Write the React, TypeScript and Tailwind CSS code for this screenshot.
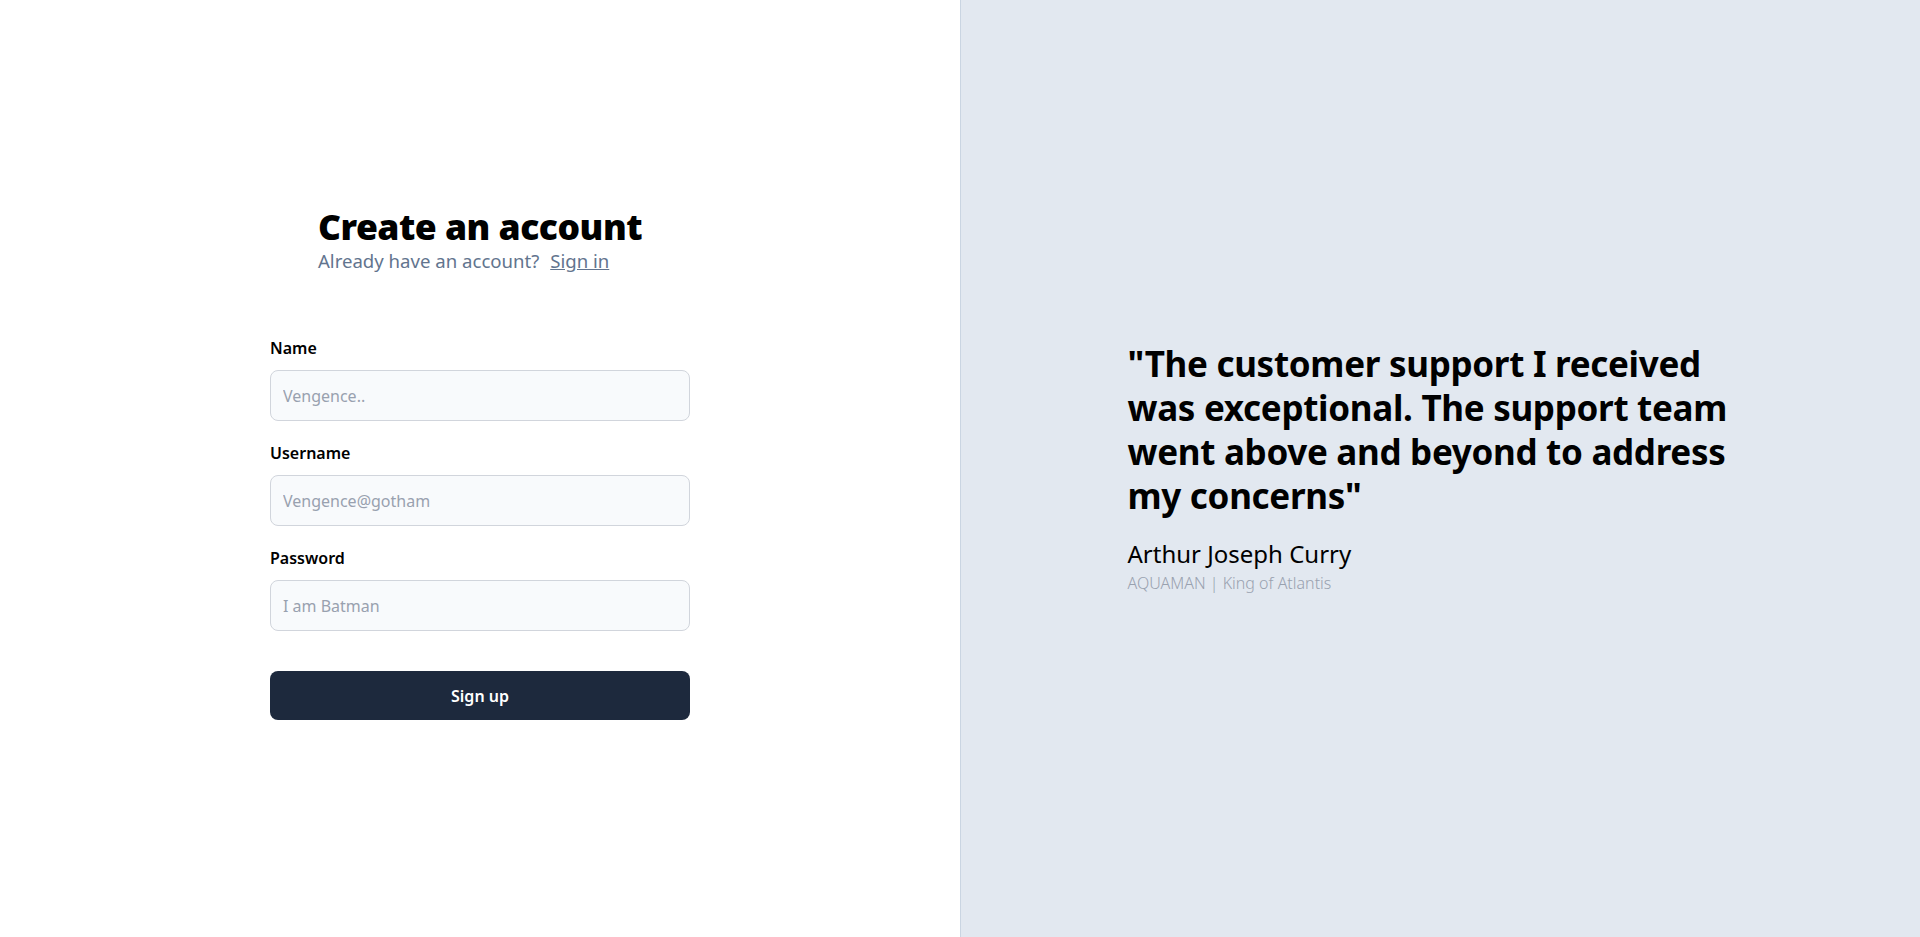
import React from "react";

export default function App() {
  return (
    <div
      className="grid grid-cols-2 h-[937px] w-full bg-white text-black"
      style={{ fontFamily: '"Noto Sans", "Open Sans", sans-serif' }}
    >
      <div className="flex flex-col items-center justify-center pb-[11px]">
        <div className="flex flex-col items-start">
          <h1 className="text-[35.5px] leading-[40px] font-black tracking-[-0.5px]">Create an account</h1>
          <p className="text-[18.6px] leading-7 text-slate-500 mt-[1px]">
            Already have an account?{" "}
            <a href="#" className="underline ml-[6px]">Sign in</a>
          </p>
        </div>
        <form className="w-[420px] mt-[61px] flex flex-col" onSubmit={(e) => e.preventDefault()}>
          <label className="text-[16px] leading-6 font-semibold mb-[10px]">Name</label>
          <input
            className="h-[51px] rounded-lg border border-gray-300 bg-slate-50 px-3 text-[16px] placeholder:text-gray-400 outline-none"
            placeholder="Vengence.."
          />
          <label className="text-[16px] leading-6 font-semibold mt-[20px] mb-[10px]">Username</label>
          <input
            className="h-[51px] rounded-lg border border-gray-300 bg-slate-50 px-3 text-[16px] placeholder:text-gray-400 outline-none"
            placeholder="Vengence@gotham"
          />
          <label className="text-[16px] leading-6 font-semibold mt-[20px] mb-[10px]">Password</label>
          <input
            type="password"
            className="h-[51px] rounded-lg border border-gray-300 bg-slate-50 px-3 text-[16px] placeholder:text-gray-400 outline-none"
            placeholder="I am Batman"
          />
          <button
            type="submit"
            className="mt-[40px] h-[49px] rounded-lg bg-slate-800 text-white text-[16px] font-semibold"
          >
            Sign up
          </button>
        </form>
      </div>
      <div className="bg-slate-200 border-l border-slate-300 flex items-center justify-center">
        <div className="w-[626px]">
          <p className="text-[35px] leading-[44px] font-bold tracking-[-0.3px]">
            "The customer support I received was exceptional. The support team went above and beyond to address my concerns"
          </p>
          <p className="mt-[20px] text-[24px] leading-8">Arthur Joseph Curry</p>
          <p className="mt-[1px] text-[16px] leading-6 font-light text-gray-400">AQUAMAN | King of Atlantis</p>
        </div>
      </div>
    </div>
  );
}
